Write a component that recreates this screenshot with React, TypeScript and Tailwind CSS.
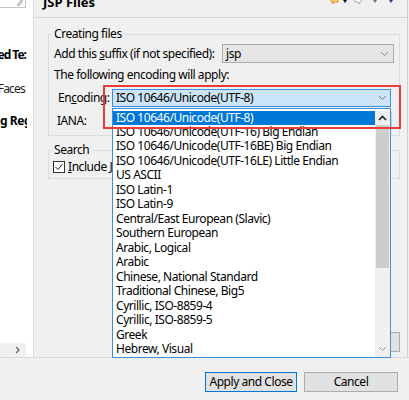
import React from "react";

const encodings = [
  "ISO 10646/Unicode(UTF-8)",
  "ISO 10646/Unicode(UTF-16) Big Endian",
  "ISO 10646/Unicode(UTF-16BE) Big Endian",
  "ISO 10646/Unicode(UTF-16LE) Little Endian",
  "US ASCII",
  "ISO Latin-1",
  "ISO Latin-9",
  "Central/East European (Slavic)",
  "Southern European",
  "Arabic, Logical",
  "Arabic",
  "Chinese, National Standard",
  "Traditional Chinese, Big5",
  "Cyrillic, ISO-8859-4",
  "Cyrillic, ISO-8859-5",
  "Greek",
  "Hebrew, Visual",
];

const Chevron = ({ up = false, className = "" }: { up?: boolean; className?: string }) => (
  <svg width="9" height="6" viewBox="0 0 9 6" className={className}>
    <path
      d={up ? "M1 5 L4.5 1.5 L8 5" : "M1 1 L4.5 4.5 L8 1"}
      fill="none"
      stroke="currentColor"
      strokeWidth={up ? 1.6 : 1}
    />
  </svg>
);

const NavIcons = () => (
  <svg width="70" height="7" viewBox="0 0 70 7" className="absolute right-[9px] top-0">
    {/* back arrow (yellow) */}
    <path d="M1 -2 L5 -5 L5 -3 L10 -3 L10 2 L5 2 L5 4 Z" fill="#f6cf5a" stroke="#c98a1a" strokeWidth="0.8" />
    <path d="M15 0 L19 0 L17 3 Z" fill="#111" />
    {/* forward arrow (outline) */}
    <path d="M35 -2 L31 -5 L31 -3 L27 -3 L27 2 L31 2 L31 4 Z" fill="#fff" stroke="#9a9a9a" strokeWidth="0.8" />
    <path d="M45 0 L49 0 L47 3 Z" fill="#777" />
    <path d="M61 0 L65 0 L63 3 Z" fill="#5b2d8e" />
  </svg>
);

export default function App() {
  return (
    <div className="relative w-[409px] h-[400px] overflow-hidden bg-[#f0f0f0] text-[12px] tracking-[-0.45px] text-black font-['Noto_Sans',sans-serif]">
      <div className="flex h-[358px] border-b border-[#dadada]">
        {/* left tree column, scrolled sideways */}
        <div className="w-[34px] shrink-0 bg-white border-r border-[#d9d9d9] flex">
          <div className="w-[27px] flex flex-col overflow-hidden">
            <div className="h-[8px] w-[26px] border-r border-b border-[#c6c6c6] relative shrink-0">
              <svg width="8" height="6" viewBox="0 0 8 6" className="absolute left-[16px] top-0">
                <path d="M1 5 L5 0 L7 1 L3 6 Z" fill="#cfcfcf" stroke="#9d9d9d" strokeWidth="0.6" />
              </svg>
            </div>
            <div className="mt-[39px] h-[16px] leading-[16px] font-bold tracking-[-1px] whitespace-nowrap flex justify-end pr-[1px]">
              <span>ed Te:</span>
            </div>
            <div className="mt-[18px] h-[16px] leading-[16px] tracking-[-0.8px] whitespace-nowrap text-[#222] flex justify-end pr-[2px]">
              <span>Faces</span>
            </div>
            <div className="mt-[16px] h-[16px] leading-[16px] font-bold whitespace-nowrap">g Reg</div>
            <div className="mt-auto h-[14px] w-[26px] bg-[#f0f0f0] flex items-center justify-end pr-[6px] text-[#606060]">
              <svg width="5" height="8" viewBox="0 0 5 8">
                <path d="M1 1 L4 4 L1 7" fill="none" stroke="currentColor" strokeWidth="1.2" />
              </svg>
            </div>
          </div>
        </div>

        {/* preference page */}
        <div className="w-[374px] shrink-0 border-r border-[#cfcfcf] flex flex-col">
          <div className="relative h-[18px] shrink-0 border-b border-[#d5d5d5] overflow-hidden">
            <div className="ml-[9px] -mt-[6px] text-[13px] leading-[16px] font-bold tracking-normal">JSP Files</div>
            <NavIcons />
          </div>

          <div className="pl-[14px] pr-[7px] pt-[8px] flex flex-col">
            <fieldset className="border border-[#dcdcdc] pl-[3px] pr-[5px] pb-[5px]">
              <legend className="px-[2px] leading-[16px]">Creating files</legend>
              <div className="flex items-center h-[19px] mt-[2px]">
                <span className="ml-[2px] whitespace-nowrap">
                  Add this <u>s</u>uffix (if not specified):
                </span>
                <div className="ml-auto w-[172px] h-[19px] bg-[#e5e5e5] border border-[#adadad] flex items-center pl-[3px] pr-[4px]">
                  <span className="flex-1 leading-[16px]">jsp</span>
                  <Chevron className="text-[#8a8a8a]" />
                </div>
              </div>
              <div className="mt-[4px] ml-[2px] h-[16px] leading-[16px] whitespace-nowrap">
                The following encoding will apply:
              </div>
              <div className="flex items-center h-[18px] mt-[6px]">
                <span className="ml-[6px] w-[54px] whitespace-nowrap">
                  En<u>c</u>oding:
                </span>
                <div className="w-[279px] h-[18px] bg-[#cce4f7] border border-[#3c8fdc] flex items-center pl-[3px] pr-[3px]">
                  <span className="flex-1 leading-[16px] whitespace-nowrap">ISO 10646/Unicode(UTF-8)</span>
                  <Chevron className="text-[#7a7a7a]" />
                </div>
              </div>
              <div className="flex items-center h-[18px] mt-[5px]">
                <span className="ml-[5px] w-[55px]">IANA:</span>
                <div className="w-[280px] h-[18px] bg-white border border-[#d0d0d0] pl-[3px] leading-[16px]">UTF-8</div>
              </div>
            </fieldset>

            <fieldset className="mt-[6px] border border-[#dcdcdc] pl-[3px] pr-[5px] pb-[5px]">
              <legend className="px-[2px] leading-[16px]">Search</legend>
              <label className="flex items-center gap-[3px] h-[13px] mt-[2px] ml-[1px]">
                <span className="w-[12px] h-[12px] bg-white border border-[#333] flex items-center justify-center">
                  <svg width="10" height="10" viewBox="0 0 10 10">
                    <path d="M1.5 5 L4 7.5 L8.5 2" fill="none" stroke="#222" strokeWidth="1" />
                  </svg>
                </span>
                <span className="leading-[16px] whitespace-nowrap">
                  <u>I</u>nclude JSP fragment files
                </span>
              </label>
            </fieldset>
          </div>

          <div className="mt-auto flex justify-end gap-[7px] pr-[7px] pb-[5px]">
            <button className="h-[20px] w-[100px] bg-[#e1e1e1] border border-[#adadad] whitespace-nowrap">Restore Defaults</button>
            <button className="h-[20px] w-[80px] bg-[#e1e1e1] border border-[#adadad]">Apply</button>
          </div>
        </div>
      </div>

      {/* dialog buttons */}
      <div className="flex justify-end gap-[7px] pt-[14px] pr-[11px]">
        <button className="h-[20px] w-[92px] bg-[#e1e1e1] border border-[#0078d7] leading-[16px] whitespace-nowrap">
          Apply and Close
        </button>
        <button className="h-[20px] w-[94px] bg-[#e1e1e1] border border-[#adadad] leading-[16px]">Cancel</button>
      </div>

      {/* open dropdown list */}
      <div className="absolute left-[112px] top-[108px] w-[279px] h-[250px] bg-white border border-[#3c8fdc] pt-[1.5px] flex">
        <ul className="flex-1 flex flex-col">
          {encodings.map((e, i) => (
            <li
              key={e}
              className={
                i === 0
                  ? "h-[14.47px] leading-[14.47px] pl-[3px] whitespace-nowrap bg-[#0078d7] text-white"
                  : "h-[14.47px] leading-[14.47px] pl-[3px] whitespace-nowrap"
              }
            >
              {e}
            </li>
          ))}
        </ul>
        <div className="w-[15px] flex flex-col bg-[#f0f0f0]">
          <div className="h-[14px] flex items-center justify-center text-[#222]">
            <Chevron up />
          </div>
          <div className="h-[143px] mx-[1px] bg-[#cdcdcd]" />
          <div className="mt-auto h-[16px] flex items-center justify-center text-[#9a9a9a]">
            <Chevron />
          </div>
        </div>
      </div>

      {/* red highlight */}
      <div className="absolute left-[103px] top-[85px] w-[298px] h-[44px] border-2 border-[#ea3b3b]" />
    </div>
  );
}
